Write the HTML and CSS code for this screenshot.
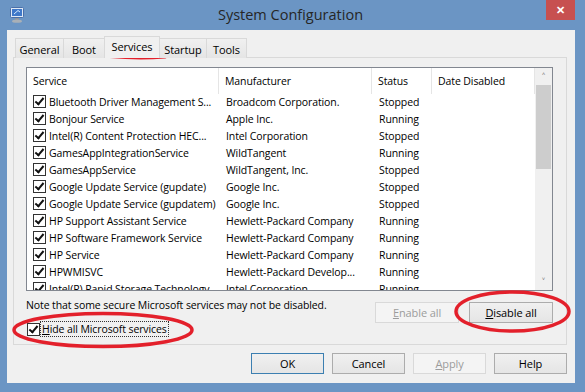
FILE: index.html
```html
<!DOCTYPE html>
<html lang="en">
<head>
  <meta charset="UTF-8">
  <title>System Configuration</title>
  <link rel="stylesheet" href="styles.css">
</head>
<body>
  <div class="window">
    <div class="titlebar">
      <svg class="app-icon" width="16" height="16" viewBox="0 0 16 16">
        <rect x="1.5" y="0.5" width="13" height="10" rx="1" fill="#dfe9f5" stroke="#4a6fa8"/>
        <rect x="3" y="2" width="10" height="7" fill="#3f78c9"/>
        <path d="M5 7 L9 3.5 L11 5" stroke="#d8ecff" stroke-width="1" fill="none"/>
        <rect x="6" y="11" width="4" height="2" fill="#8d949c"/>
        <ellipse cx="8" cy="14.2" rx="5" ry="1.6" fill="#a9b0b7"/>
      </svg>
      <div class="title">System Configuration</div>
      <div class="close">&#x2715;</div>
    </div>

    <div class="client">
      <div class="tabs">
        <div class="tab tab-general">General</div>
        <div class="tab tab-boot">Boot</div>
        <div class="tab tab-services active">Services</div>
        <div class="tab tab-startup">Startup</div>
        <div class="tab tab-tools">Tools</div>
      </div>

      <div class="panel">
        <div class="list">
          <div class="list-main">
            <div class="list-head">
              <div class="hcell">Service</div>
              <div class="hcell">Manufacturer</div>
              <div class="hcell">Status</div>
              <div class="hcell">Date Disabled</div>
            </div>
            <div class="row"><div class="cell svc"><span class="check"></span>Bluetooth Driver Management S...</div><div class="cell">Broadcom Corporation.</div><div class="cell">Stopped</div><div class="cell"></div></div>
            <div class="row"><div class="cell svc"><span class="check"></span>Bonjour Service</div><div class="cell">Apple Inc.</div><div class="cell">Running</div><div class="cell"></div></div>
            <div class="row"><div class="cell svc"><span class="check"></span>Intel(R) Content Protection HEC...</div><div class="cell">Intel Corporation</div><div class="cell">Stopped</div><div class="cell"></div></div>
            <div class="row"><div class="cell svc"><span class="check"></span>GamesAppIntegrationService</div><div class="cell">WildTangent</div><div class="cell">Running</div><div class="cell"></div></div>
            <div class="row"><div class="cell svc"><span class="check"></span>GamesAppService</div><div class="cell">WildTangent, Inc.</div><div class="cell">Stopped</div><div class="cell"></div></div>
            <div class="row"><div class="cell svc"><span class="check"></span>Google Update Service (gupdate)</div><div class="cell">Google Inc.</div><div class="cell">Stopped</div><div class="cell"></div></div>
            <div class="row"><div class="cell svc"><span class="check"></span>Google Update Service (gupdatem)</div><div class="cell">Google Inc.</div><div class="cell">Stopped</div><div class="cell"></div></div>
            <div class="row"><div class="cell svc"><span class="check"></span>HP Support Assistant Service</div><div class="cell">Hewlett-Packard Company</div><div class="cell">Running</div><div class="cell"></div></div>
            <div class="row"><div class="cell svc"><span class="check"></span>HP Software Framework Service</div><div class="cell">Hewlett-Packard Company</div><div class="cell">Running</div><div class="cell"></div></div>
            <div class="row"><div class="cell svc"><span class="check"></span>HP Service</div><div class="cell">Hewlett-Packard Company</div><div class="cell">Running</div><div class="cell"></div></div>
            <div class="row"><div class="cell svc"><span class="check"></span>HPWMISVC</div><div class="cell">Hewlett-Packard Develop...</div><div class="cell">Running</div><div class="cell"></div></div>
            <div class="row"><div class="cell svc"><span class="check"></span>Intel(R) Rapid Storage Technology</div><div class="cell">Intel Corporation</div><div class="cell">Running</div><div class="cell"></div></div>
          </div>
          <div class="scrollbar">
            <div class="arrow">&#x2c4;</div>
            <div class="thumb"></div>
            <div class="track"></div>
            <div class="arrow">&#x2c5;</div>
          </div>
        </div>

        <div class="below">
          <div class="below-left">
            <div class="note">Note that some secure Microsoft services may not be disabled.</div>
            <div class="hide-row">
              <span class="check"></span>
              <span class="focus"><u>H</u>ide all Microsoft services</span>
            </div>
          </div>
          <div class="below-right">
            <div class="btn disabled"><u>E</u>nable all</div>
            <div class="btn"><u>D</u>isable all</div>
          </div>
        </div>
      </div>

      <div class="actions">
        <div class="btn default">OK</div>
        <div class="btn">Cancel</div>
        <div class="btn disabled"><u>A</u>pply</div>
        <div class="btn">Help</div>
      </div>
    </div>
  </div>

  <svg class="marks" width="585" height="392" viewBox="0 0 585 392">
    <path d="M110 56.5 Q138 59 165 57" stroke="#e3202b" stroke-width="3" fill="none" stroke-linecap="round"/>
    <ellipse cx="103" cy="330" rx="89" ry="16.5" stroke="#e3202b" stroke-width="3.5" fill="none"/>
    <ellipse cx="512.5" cy="311.5" rx="56.5" ry="19.5" stroke="#e3202b" stroke-width="3.5" fill="none"/>
  </svg>
</body>
</html>
```

FILE: styles.css
```css
body {
  margin: 0;
  width: 585px;
  height: 392px;
  background-color: #6b95c4;
  font-family: "Open Sans", "Noto Sans", sans-serif;
  font-size: 10.5px;
  letter-spacing: -0.1px;
  color: #000;
  position: relative;
  overflow: hidden;
}

.window {
  display: flex;
  flex-direction: column;
  height: 392px;
}

.titlebar {
  height: 30px;
  display: flex;
  align-items: flex-start;
  position: relative;
}

.app-icon {
  margin: 7px 0 0 9px;
}

.title {
  flex: 1;
  text-align: center;
  font-size: 14.5px;
  letter-spacing: 0;
  color: #262626;
  margin-top: 5px;
  padding-left: 10px;
}

.close {
  width: 29px;
  height: 20px;
  margin-right: 10px;
  background-color: #c75050;
  color: #fff;
  font-size: 11px;
  font-weight: bold;
  text-align: center;
  line-height: 20px;
}

.client {
  margin: 0 10px 9px 7px;
  flex: 1;
  background-color: #f0f0f0;
  padding: 7px 8px 0 6px;
  display: flex;
  flex-direction: column;
}

/* tabs */
.tabs {
  display: flex;
  align-items: flex-end;
  height: 21px;
  margin-left: 2px;
  position: relative;
  z-index: 1;
  margin-bottom: -1px;
}

.tab {
  box-sizing: border-box;
  height: 20px;
  border: 1px solid #d9d9d9;
  border-bottom: none;
  background: linear-gradient(#f0f0f0, #e5e5e5);
  margin-right: -1px;
  text-align: center;
  line-height: 18px;
  padding-top: 2px;
  font-size: 11px;
}

.tab-general { width: 49px; }
.tab-boot { width: 42px; }
.tab-services { width: 56px; }
.tab-startup { width: 48px; }
.tab-tools { width: 41px; }

.tab.active {
  height: 22px;
  background: #f0f0f0;
  position: relative;
  z-index: 2;
  padding-top: 1px;
}

.panel {
  height: 288px;
  box-sizing: border-box;
  border: 1px solid #d9d9d9;
  background-color: #f0f0f0;
  padding: 9px 13px 0 12px;
}

/* service list */
.list {
  height: 224px;
  box-sizing: border-box;
  border: 1px solid #828790;
  background-color: #fff;
  display: flex;
}

.list-main {
  flex: 1;
  overflow: hidden;
}

.list-head,
.row {
  display: grid;
  grid-template-columns: 192px 153px 60px 103px;
}

.list-head {
  height: 25px;
}

.hcell {
  border-right: 1px solid #e5e5e5;
  padding-left: 6px;
  line-height: 26px;
}

.row {
  height: 17px;
  line-height: 18px;
}

.cell {
  padding-left: 7px;
  white-space: nowrap;
  overflow: hidden;
}

.cell.svc {
  padding-left: 6px;
  display: flex;
  align-items: center;
}

.check {
  width: 13px;
  height: 13px;
  box-sizing: border-box;
  border: 1px solid #333;
  background: #fff;
  position: relative;
  flex: none;
  margin-right: 3px;
}

.check::after {
  content: "";
  position: absolute;
  left: 3px;
  top: 0px;
  width: 3px;
  height: 7px;
  border-right: 2px solid #111;
  border-bottom: 2px solid #111;
  transform: rotate(40deg);
}

.scrollbar {
  width: 17px;
  display: flex;
  flex-direction: column;
  background-color: #f0f0f0;
}

.arrow {
  height: 17px;
  text-align: center;
  line-height: 17px;
  font-size: 11px;
  color: #606060;
}

.thumb {
  height: 84px;
  margin: 0 1px;
  background-color: #cdcdcd;
}

.track {
  flex: 1;
}

/* below the list */
.below {
  display: flex;
  justify-content: space-between;
  margin-top: 6px;
}

.note {
  line-height: 16px;
}

.hide-row {
  display: flex;
  align-items: center;
  margin-top: 9px;
  margin-left: 1px;
  line-height: 14px;
}

.hide-row .check {
  margin-right: 1px;
}

.focus {
  outline: 1px dotted #333;
  outline-offset: 0;
  padding: 0 1px;
}

.below-right {
  display: flex;
  gap: 10px;
  margin-top: 5px;
}

.below-right .btn {
  width: 84px;
}

/* buttons */
.btn {
  box-sizing: border-box;
  width: 73px;
  height: 21px;
  border: 1px solid #acacac;
  background: linear-gradient(#f0f0f0, #e5e5e5);
  text-align: center;
  line-height: 19px;
  font-size: 11px;
}

.btn.default {
  border-color: #3c7fb1;
}

.btn.disabled {
  background: #f4f4f4;
  border-color: #d9d9d9;
  color: #9c9c9c;
}

.actions {
  display: flex;
  justify-content: flex-end;
  gap: 8px;
  margin-top: 8px;
}

.marks {
  position: absolute;
  left: 0;
  top: 0;
  pointer-events: none;
}
```
